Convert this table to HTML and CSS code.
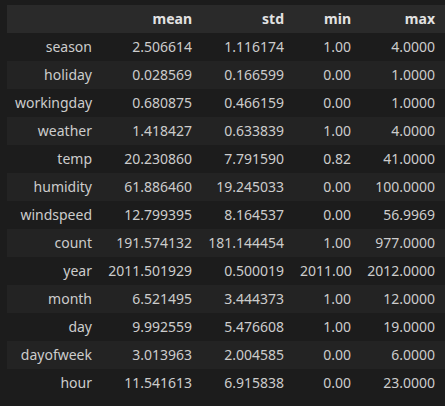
FILE: index.html
```html
<!DOCTYPE html>
<html>
<head>
<meta charset="utf-8">
<link rel="stylesheet" href="styles.css">
</head>
<body>
<div class="output">
<table class="dataframe">
<colgroup>
<col class="c-idx"><col class="c-mean"><col class="c-std"><col class="c-min"><col class="c-max">
</colgroup>
<thead>
<tr><th></th><th>mean</th><th>std</th><th>min</th><th>max</th></tr>
</thead>
<tbody>
<tr><th>season</th><td>2.506614</td><td>1.116174</td><td>1.00</td><td>4.0000</td></tr>
<tr><th>holiday</th><td>0.028569</td><td>0.166599</td><td>0.00</td><td>1.0000</td></tr>
<tr><th>workingday</th><td>0.680875</td><td>0.466159</td><td>0.00</td><td>1.0000</td></tr>
<tr><th>weather</th><td>1.418427</td><td>0.633839</td><td>1.00</td><td>4.0000</td></tr>
<tr><th>temp</th><td>20.230860</td><td>7.791590</td><td>0.82</td><td>41.0000</td></tr>
<tr><th>humidity</th><td>61.886460</td><td>19.245033</td><td>0.00</td><td>100.0000</td></tr>
<tr><th>windspeed</th><td>12.799395</td><td>8.164537</td><td>0.00</td><td>56.9969</td></tr>
<tr><th>count</th><td>191.574132</td><td>181.144454</td><td>1.00</td><td>977.0000</td></tr>
<tr><th>year</th><td>2011.501929</td><td>0.500019</td><td>2011.00</td><td>2012.0000</td></tr>
<tr><th>month</th><td>6.521495</td><td>3.444373</td><td>1.00</td><td>12.0000</td></tr>
<tr><th>day</th><td>9.992559</td><td>5.476608</td><td>1.00</td><td>19.0000</td></tr>
<tr><th>dayofweek</th><td>3.013963</td><td>2.004585</td><td>0.00</td><td>6.0000</td></tr>
<tr><th>hour</th><td>11.541613</td><td>6.915838</td><td>0.00</td><td>23.0000</td></tr>
</tbody>
</table>
</div>
</body>
</html>
```
FILE: styles.css
```css
html, body {
  margin: 0;
  padding: 0;
  background: #1c1c1c;
}
body {
  width: 445px;
  height: 406px;
  overflow: hidden;
  font-family: "Noto Sans", "Open Sans", sans-serif;
  font-size: 14px;
  color: #cccccc;
}
.output {
  padding: 5px 0 0 7px;
}
.dataframe {
  border-collapse: collapse;
  table-layout: fixed;
  width: 438px;
}
.c-idx { width: 93px; }
.c-mean { width: 100px; }
.c-std { width: 92px; }
.c-min { width: 67px; }
.c-max { width: 86px; }
.dataframe th,
.dataframe td {
  height: 28px;
  padding: 0 8px;
  text-align: right;
  white-space: nowrap;
  font-weight: normal;
  line-height: 28px;
  box-sizing: border-box;
}
.dataframe th:last-child,
.dataframe td:last-child {
  padding-right: 10px;
}
.dataframe thead tr {
  background: #2a2a2a;
}
.dataframe thead th {
  font-weight: bold;
  color: #e2e2e2;
}
.dataframe tbody tr:nth-child(even) {
  background: #232323;
}
```
